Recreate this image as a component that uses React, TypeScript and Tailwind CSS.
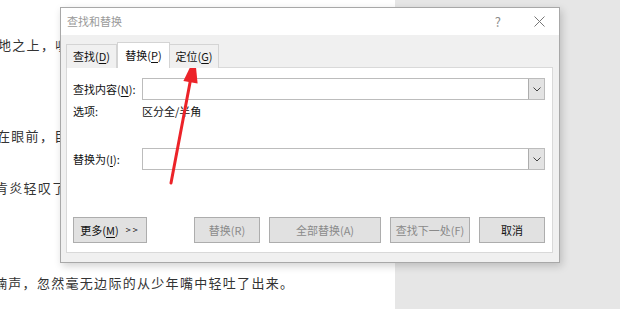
import React from "react"

const cjk = { fontFamily: '"Noto Sans CJK SC", "Noto Sans", sans-serif' }

function Key({ children }: { children: React.ReactNode }) {
  return <span className="underline underline-offset-2">{children}</span>
}

function Combo() {
  return (
    <div className="flex h-[22px] w-[403px] border border-[#bcbcbc] bg-white">
      <div className="flex-1" />
      <div className="flex w-[16px] items-center justify-center border-l border-[#adadad] bg-[#e3e3e3]">
        <svg width="8" height="5" viewBox="0 0 8 5" fill="none" stroke="#444" strokeWidth="1">
          <path d="M0.5 0.5 L4 4 L7.5 0.5" />
        </svg>
      </div>
    </div>
  )
}

function Btn({ w, dim, children }: { w: string; dim?: boolean; children: React.ReactNode }) {
  return (
    <div
      className={`flex h-[26px] items-center justify-center border border-[#adadad] bg-[#e1e1e1] ${w} ${
        dim ? "text-[#8a8a8a]" : "text-[#111]"
      }`}
    >
      {children}
    </div>
  )
}

function Dialog() {
  return (
    <div
      className="absolute left-[60px] top-[7px] w-[500px] border border-[#a8a8a8] bg-[#f0f0f0] text-[11px] shadow-[2px_3px_8px_rgba(0,0,0,0.18)]"
      style={cjk}
    >
      <div className="flex h-[27px] items-center bg-white pl-[6px] pr-[14px] text-[12px] text-[#9a9a9a]">
        <span className="text-[11px]">查找和替换</span>
        <span className="ml-auto mr-[33px] text-[13px] text-[#8c8c8c]">?</span>
        <svg width="11" height="11" viewBox="0 0 11 11" stroke="#777" strokeWidth="1">
          <path d="M0.5 0.5 L10.5 10.5 M10.5 0.5 L0.5 10.5" />
        </svg>
      </div>

      <div className="px-[5px] pb-[9px] pt-[7px]">
        <div className="relative z-10 -mb-px flex items-end text-[#111]">
          <div className="flex h-[24px] w-[51px] items-center justify-center border border-b-0 border-[#d4d4d4] bg-[#f0f0f0]">
            查找(<Key>D</Key>)
          </div>
          <div className="flex h-[26px] w-[53px] items-center justify-center border border-b-0 border-[#d4d4d4] bg-white">
            替换(<Key>P</Key>)
          </div>
          <div className="flex h-[24px] w-[49px] items-center justify-center border border-b-0 border-l-0 border-[#d4d4d4] bg-[#f0f0f0]">
            定位(<Key>G</Key>)
          </div>
        </div>

        <div className="flex h-[186px] w-[487px] flex-col border border-[#d9d9d9] bg-white pl-[6px] pr-[7px] pt-[10px] text-[#111]">
          <div className="flex items-center">
            <span className="w-[69px]">
              查找内容(<Key>N</Key>):
            </span>
            <Combo />
          </div>
          <div className="flex h-[22px] items-center">
            <span className="w-[69px]">选项:</span>
            <span>区分全/半角</span>
          </div>
          <div className="mt-[26px] flex items-center">
            <span className="w-[69px]">
              替换为(<Key>I</Key>):
            </span>
            <Combo />
          </div>
          <div className="mt-[47px] flex">
            <Btn w="w-[74px]">
              <span>
                更多(<Key>M</Key>)
              </span>
              <span className="ml-[7px] text-[9px] tracking-[2px]">&gt;&gt;</span>
            </Btn>
            <div className="ml-auto flex gap-[9px]">
              <Btn w="w-[66px]" dim>
                替换(R)
              </Btn>
              <Btn w="w-[112px]" dim>
                全部替换(A)
              </Btn>
              <Btn w="w-[80px]" dim>
                查找下一处(F)
              </Btn>
              <Btn w="w-[66px]">取消</Btn>
            </div>
          </div>
        </div>
      </div>
    </div>
  )
}

function Arrow() {
  return (
    <svg className="pointer-events-none absolute left-0 top-0" width="620" height="309">
      <line x1="171" y1="183" x2="190.5" y2="80" stroke="#ec2329" strokeWidth="3" strokeLinecap="round" />
      <polygon points="195,57 183.4,81 197.6,83.6" fill="#ec2329" />
    </svg>
  )
}

export default function App() {
  return (
    <div className="relative flex h-[309px] w-[620px] overflow-hidden bg-[#e6e6e6]">
      <div
        className="flex w-[395px] flex-col overflow-hidden whitespace-nowrap bg-white pt-[35px] text-[13px] leading-[20px] tracking-[1.3px] text-[#333]"
        style={cjk}
      >
        <p className="ml-[-2px]">地之上，嗄</p>
        <p className="ml-[-3px] mt-[71px]">在眼前，目</p>
        <p className="ml-[-5px] mt-[32px]">肯炎轻叹了</p>
        <p className="ml-[-6px] mt-[75px]">喃声，忽然毫无边际的从少年嘴中轻吐了出来。</p>
      </div>
      <div className="flex-1" />
      <Dialog />
      <Arrow />
    </div>
  )
}
